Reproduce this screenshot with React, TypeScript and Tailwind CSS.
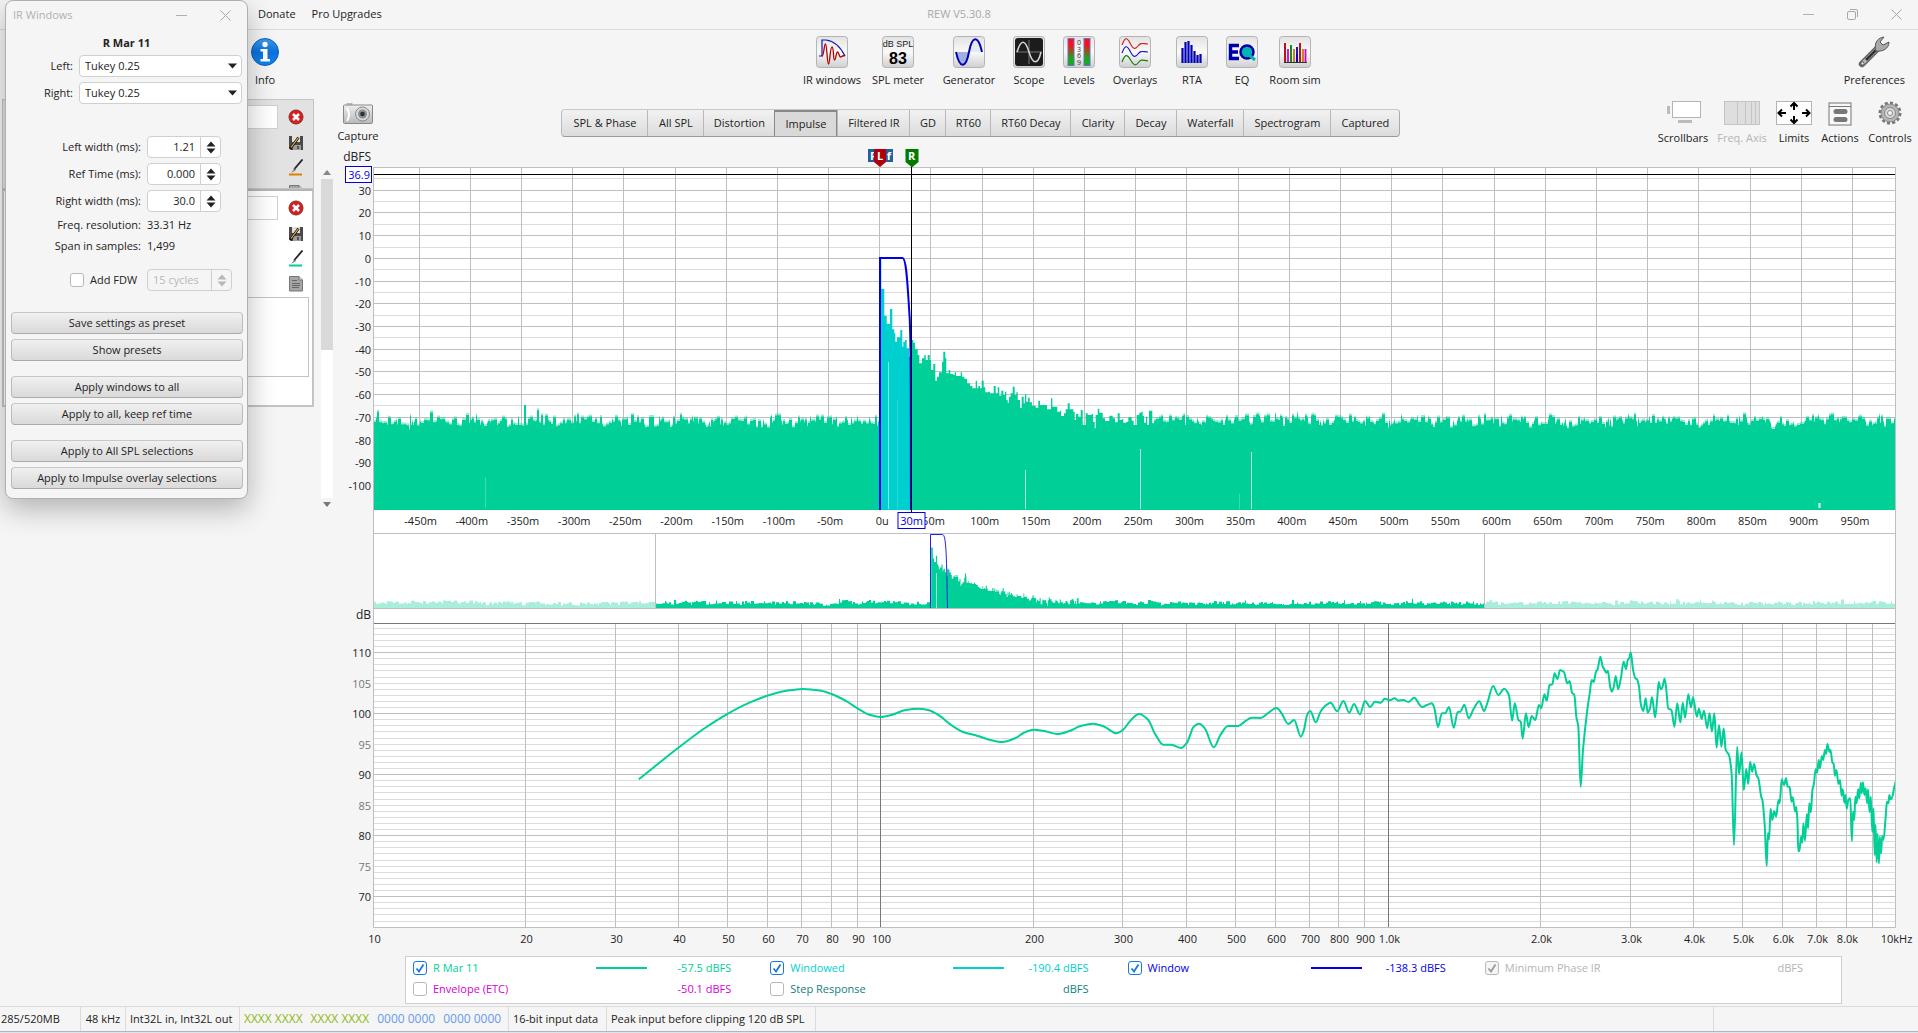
import React from "react";

type Pt = [number, number];

const GREEN = "#00cf97";
const CYAN = "#00cfcf";

/* ---------- data ---------- */

const parse = (s: string): Pt[] => s.trim().split(/\s+/).map((p) => p.split(",").map(Number) as Pt);

const LOW = parse(`42,358 132,262 187,207 243,160 290,128 333,106 370,93 410,87 450,92 474,102 505,122 532,145 560,165 584,171 610,164 640,150 668,146 690,150 712,164 745,198 770,217 800,227 830,240 857,246 885,235 905,218 926,209 950,213 980,222 1005,214 1030,199 1060,191 1085,200 1112,220 1128,208 1143,182 1163,162 1182,178 1200,225 1217,254 1235,254 1257,264 1270,248 1285,200 1297,191 1310,205 1330,262 1345,225 1362,198 1385,198 1400,184 1415,173 1435,174 1450,161 1471,144 1482,160 1497,192 1510,180`).map(([x, y]): Pt => [247 + x / 2.24, 660 + y / 3]);

const HIGH = parse(`2,350 10,330 18,285 26,273 40,307 52,275 62,260 78,248 94,274 110,243 125,278 137,252 152,283 165,243 178,261 190,245 205,248 215,236 228,241 240,235 250,242 262,240 275,246 290,233 302,252 310,261 322,255 335,250 341,265 350,321 360,280 368,280 378,261 390,323 400,276 407,275 417,254 428,295 440,268 455,244 467,273 475,250 490,198 503,225 518,206 530,225 538,302 545,250 554,300 560,305 565,356 573,280 580,321 588,288 597,300 606,255 612,265 620,223 626,242 633,195 640,193 646,160 653,178 660,150 670,157 678,190 684,183 690,218 696,225 701,290 706,320 712,500 718,390 730,260 735,220 740,180 745,186 751,155 755,148 762,110 768,140 773,150 777,158 781,152 787,200 791,215 796,200 801,168 807,208 814,175 821,125 827,147 831,122 836,112 839,97 845,150 851,175 855,178 860,200 865,255 871,273 877,235 882,278 888,265 893,231 901,292 906,240 910,186 915,208 919,203 925,176 929,205 934,265 942,270 950,320 957,250 965,307 971,248 977,293 985,223 992,262 997,232 1007,290 1012,266 1019,297 1025,272 1033,325 1039,280 1045,335 1051,280 1057,383 1063,315 1069,380 1075,325 1080,390 1088,405 1095,460 1101,676 1109,380 1114,463 1120,397 1126,510 1132,447 1137,492 1142,425 1147,455 1152,432 1158,465 1163,475 1170,530 1173,540 1179,615 1184,738 1187,640 1190,658 1194,566 1198,600 1203,573 1208,590 1214,540 1217,550 1222,478 1228,495 1233,475 1237,500 1242,500 1247,545 1250,532 1256,575 1259,560 1262,600 1264,693 1267,693 1271,650 1274,668 1277,610 1281,662 1286,582 1289,625 1292,550 1296,577 1300,510 1304,490 1308,448 1312,458 1316,420 1319,445 1324,408 1327,420 1332,390 1335,402 1338,372 1343,395 1346,390 1351,430 1354,430 1357,467 1361,450 1366,492 1370,480 1374,527 1377,508 1381,548 1384,525 1387,566 1391,540 1396,535 1400,663 1403,575 1406,600 1409,530 1412,550 1416,508 1419,535 1423,488 1425,520 1428,487 1432,525 1435,505 1439,550 1441,508 1445,577 1448,530 1452,635 1455,565 1458,705 1460,615 1463,727 1465,642 1469,730 1471,650 1474,700 1477,648 1480,660 1486,590 1489,545 1493,550 1495,525 1499,538 1504,525 1507,505 1509,495 1513,478`).map(([x, y]): Pt => [927 + x / 2.537, 620 + y / 3]);

const DIRECT = parse(`62,355 64,447 73,527 80,552 90,507 97,568 103,580 106,605 111,592 121,570 127,620 130,605 135,600 140,625 147,650`).map(([x, y]): Pt => [487 + x / 3, 140 + y / 3]);

const DECAY = parse(`153,600 160,608 165,628 173,645 178,670 186,655 193,645 197,660 203,645 209,660 213,690 220,672 226,722 231,710 237,697 246,665 250,635 256,655 259,700 266,690 271,702 280,705 284,697 288,708 302,697 306,710 313,716 321,730 330,738 337,745 347,722 351,745 355,738 360,745 365,722 371,742 376,757 385,755 390,760 401,738 407,760 413,742 418,767 424,752 430,765 435,755 439,780 443,788 447,770 452,760 458,740 464,765 469,757 473,780 480,803 485,770 491,790 495,763 499,785 504,773 509,787 516,797 527,803 535,782 540,795 554,795 561,808 573,775 577,800 589,800 592,815 600,812 603,828 612,820 617,808 623,790 629,808 640,815 644,840 648,822 655,830 662,810 668,855 677,820 683,825 695,822 699,845 704,865 707,825 713,806 718,818 728,835 735,843 748,827 758,835 765,847 773,820 779,840 785,838 790,848 799,845 805,832 815,842 821,855 830,825 838,818 844,815 848,828 852,848 858,830 862,855 867,812 877,850`).map(([x, y]): Pt => [487 + x / 3, 140 + y / 3]);

function noise(from: number, to: number, seed: number, base: number, amp: number): Pt[] {
  let s = seed;
  const rnd = () => {
    s = (s * 1664525 + 1013904223) % 4294967296;
    return s / 4294967296;
  };
  const out: Pt[] = [];
  let drift = 0;
  for (let x = from; x < to; ) {
    drift = drift * 0.7 + (rnd() - 0.5) * amp * 0.5;
    const spike = rnd() > 0.93 ? -amp * (0.3 + rnd() * 0.6) : 0;
    out.push([x, base + drift + (rnd() - 0.5) * amp * 1.1 + spike]);
    x += 1 + Math.floor(rnd() * 3);
  }
  return out;
}

const NOISE_LEFT = noise(0, 507, 7, 422, 8);
const NOISE_RIGHT = noise(781, 1523, 23, 421, 8);

function stepArea(pts: Pt[], end: number, bottom: number): string {
  let d = `M${pts[0][0]} ${bottom}V${pts[0][1].toFixed(1)}`;
  for (let i = 1; i < pts.length; i++) d += `H${pts[i][0].toFixed(1)}V${pts[i][1].toFixed(1)}`;
  return `${d}H${end}V${bottom}Z`;
}

function smooth(pts: Pt[]): string {
  const n = pts.length;
  const sl = (i: number) => (pts[i + 1][1] - pts[i][1]) / (pts[i + 1][0] - pts[i][0]);
  const m = pts.map((_, i) => {
    if (i === 0) return sl(0);
    if (i === n - 1) return sl(n - 2);
    const a = sl(i - 1);
    const b = sl(i);
    return a * b <= 0 ? 0 : (2 * a * b) / (a + b);
  });
  let d = `M${pts[0][0]} ${pts[0][1]}`;
  for (let i = 0; i < n - 1; i++) {
    const [x0, y0] = pts[i];
    const [x1, y1] = pts[i + 1];
    const h = (x1 - x0) / 3;
    d += `C${(x0 + h).toFixed(1)} ${(y0 + m[i] * h).toFixed(1)} ${(x1 - h).toFixed(1)} ${(y1 - m[i + 1] * h).toFixed(1)} ${x1.toFixed(1)} ${y1.toFixed(1)}`;
  }
  return d;
}

const toOverview = (p: Pt[]): Pt[] => p.map(([x, y]) => [557.6 + (x - 507.3) * 0.544, 534.5 + (y - 258.3) * 0.419]);

/* ---------- scales ---------- */

const W = 1523;
const pct = (x: number) => `${((x / W) * 100).toFixed(3)}%`;
const timeX = (ms: number) => Math.round(507.3 + ms * 1.0238) - 0.5;
const dbfsY = (db: number) => Math.round(257.9 - db * 2.27) + 0.5;
const freqX = (f: number) => Math.round(0.5 + 507.5 * (Math.log10(f) - 1)) - 0.5;
const splY = (db: number) => Math.round(714.1 - (db - 100) * 6.1) - 0.5;

const TIMES = Array.from({ length: 29 }, (_, i) => -450 + i * 50);
const FREQS = [20, 30, 40, 50, 60, 70, 80, 90, 100, 200, 300, 400, 500, 600, 700, 800, 900, 1000, 2000, 3000, 4000, 5000, 6000, 7000, 8000, 9000];
const FREQ_LABELS: [number, string][] = [
  [10, "10"], [20, "20"], [30, "30"], [40, "40"], [50, "50"], [60, "60"], [70, "70"], [80, "80"], [90, "90"], [100, "100"],
  [200, "200"], [300, "300"], [400, "400"], [500, "500"], [600, "600"], [700, "700"], [800, "800"], [900, "900"], [1000, "1.0k"],
  [2000, "2.0k"], [3000, "3.0k"], [4000, "4.0k"], [5000, "5.0k"], [6000, "6.0k"], [7000, "7.0k"], [8000, "8.0k"], [10000, "10kHz"],
];

function Charts() {
  const step5 = Array.from({ length: 22 }, (_, i) => 35 - i * 5);
  const spl = Array.from({ length: 49 }, (_, i) => 66 + i);
  return (
    <div className="mr-[22px] flex">
      <svg className="w-[33px] shrink-0 overflow-visible text-[11px]" height="805" fill="#222" textAnchor="end" role="img" aria-label="Level axes">
        <g transform="translate(0,-145)">
          <text x="31" y="161" className="text-xs">dBFS</text>
          {[30, 20, 10, 0, -10, -20, -30, -40, -50, -60, -70, -80, -90, -100].map((v) => (
            <text key={v} x="31" y={dbfsY(v) + 4}>{v}</text>
          ))}
          <rect x="5.5" y="166.500" width="26" height="16" fill="#fff" stroke="#0000e6" />
          <text x="30" y="179" fill="#0000e6">36.9</text>
          <text x="31" y="619" className="text-xs">dB</text>
          {[110, 105, 100, 95, 90, 85, 80, 75, 70].map((v) => (
            <text key={v} x="31" y={splY(v) + 4} fill={v % 10 ? "#777" : "#222"}>{v}</text>
          ))}
        </g>
      </svg>
      <svg className="min-w-0 flex-1 overflow-visible text-[11px]" height="805" fill="#222" textAnchor="middle" role="img" aria-label="Impulse response and frequency response">
        <svg width="100%" height="805" viewBox="0 145 1523 805" preserveAspectRatio="none" fill="none">
          <rect x="0" y="167" width="1523" height="760" fill="#fff" />
          <g shapeRendering="crispEdges">
            {step5.map((v) => (
              <path key={v} d={`M0 ${dbfsY(v)}H1523`} stroke={v % 10 ? "#dcdcdc" : "#bfbfbf"} />
            ))}
            {TIMES.map((t) => (
              <path key={t} d={`M${timeX(t)} 167V510`} stroke="#bfbfbf" />
            ))}
            <path d="M0 167.5H1523M0 533.500H1523M0 608.500H1523" stroke="#bfbfbf" />
            {spl.map((v) => (
              <path key={v} d={`M0 ${splY(v)}H1523`} stroke={v % 10 ? "#dcdcdc" : "#bfbfbf"} />
            ))}
            {FREQS.map((f) => (
              <path key={f} d={`M${freqX(f)} 624V927`} stroke={f === 100 || f === 1000 ? "#777" : "#bfbfbf"} />
            ))}
            <path d="M0 623.500H1523" stroke="#777" />
          </g>
          <g fill={GREEN}>
            <path d={stepArea(NOISE_LEFT.map(([x, y]): Pt => [x, y - 2]), 507, 510)} opacity="0.4" />
            <path d={stepArea(NOISE_LEFT, 507, 510)} />
            <path d={stepArea(DECAY, 781, 510)} />
            <path d={stepArea(NOISE_RIGHT.map(([x, y]): Pt => [x, y - 2]), 1523, 510)} opacity="0.4" />
            <path d={stepArea(NOISE_RIGHT, 1523, 510)} />
            <path d="M151 405H153V425H151Z" />
          </g>
          <path d={stepArea(DIRECT, 538, 510)} fill={CYAN} />
          <path d="M515.500 362V509" stroke="#9feee0" strokeWidth="1" opacity="0.8" />
          <path d="M524.500 400V509" stroke="#4adcd8" strokeWidth="1" opacity="0.6" />
          <path d="M652.500 470V509M767.500 449V509M878.500 452V509" stroke="#b5efdd" />
          <path d="M1446.500 503V508" stroke="#e5fff7" strokeWidth="2" />
          <path d="M112.500 477V508M866.500 494V509" stroke="#3ddbb0" />
          <path d="M507 510V258H529.500C533.500 258 534.500 285 536.500 315S537.500 400 538 510" stroke="#0000f0" strokeWidth="2" />
          <path d="M0 174.500H1523M538.500 166V512" stroke="#000" shapeRendering="crispEdges" />
          <g>
            <path d={stepArea(noise(0, 283, 91, 603, 3), 283, 608)} fill="#a9eedb" />
            <path d={stepArea(noise(1111, 1523, 19, 603, 3), 1523, 608)} fill="#a9eedb" />
            <path d={stepArea(noise(283, 558, 57, 603, 3), 558, 608)} fill={GREEN} />
            <path d={stepArea(toOverview([...DIRECT.slice(1), ...DECAY]), 707, 608)} fill={GREEN} />
            <path d={stepArea(noise(707, 1111, 33, 603, 3), 1111, 608)} fill={GREEN} />
            <path d="M563.500 573V608" stroke="#9eeedb" />
            <path d="M282.500 534V608M1111.500 534V608" stroke="#bfbfbf" />
            <path d="M557.500 608V534.500H569.500C573.500 534.500 573.500 560 574.500 608" stroke="#2222e8" />
          </g>
          <path d={smooth([...LOW, ...HIGH])} stroke={GREEN} strokeWidth="2" strokeLinejoin="round" />
          <path d="M0.500 167V927.500H1522.500V167" stroke="#bfbfbf" />
        </svg>
        <g transform="translate(0,-145)">
          {TIMES.map((t) => (
            <text key={t} x={pct(507.3 + t * 1.0238 + (t < 0 ? 1 : 2))} y="525">{t === 0 ? "0u" : `${t}m`}</text>
          ))}
          {FREQ_LABELS.map(([f, s]) => (
            <text key={f} x={pct(freqX(f) + 1)} y="943">{s}</text>
          ))}
          <svg x={pct(538.5)} y="0" className="overflow-visible">
            <rect x="-13.500" y="512.500" width="27" height="16" fill="#fff" stroke="#0000e6" />
            <text x="0" y="525" fill="#0000e6">30m</text>
            <path d="M-6 149H7V162L1 167H0L-6 162Z" fill="#007a00" />
            <text x="0" y="160" fill="#fff" className="text-[11px] font-bold">R</text>
          </svg>
          <svg x={pct(507)} y="0" className="overflow-visible font-bold" fill="#fff">
            <path d="M-12 149H13V162H-12Z" fill="#25609a" />
            <text x="-7" y="160">F</text>
            <text x="9" y="160">f</text>
            <path d="M-6 149H6V162L0 167L-6 162Z" fill="#ad000c" />
            <text x="0" y="160">L</text>
          </svg>
        </g>
      </svg>
    </div>
  );
}

/* ---------- icons ---------- */

function Tile({ children }: { children?: React.ReactNode }) {
  return (
    <svg width="32" height="32" viewBox="0 0 32 32" fill="none" aria-hidden="true">
      <defs>
        <linearGradient id="tile" x1="0" y1="0" x2="0" y2="1">
          <stop offset="0" stopColor="#e2e2e2" />
          <stop offset="0.5" stopColor="#fafafa" />
          <stop offset="1" stopColor="#cfcfcf" />
        </linearGradient>
      </defs>
      <rect x="0.500" y="0.500" width="31" height="31" rx="3" fill="url(#tile)" stroke="#b4b4b4" />
      {children}
    </svg>
  );
}

const TOOLS: { name: string; cls: string; art: React.ReactNode }[] = [
  {
    name: "IR windows", cls: "w-[66px]",
    art: (<><path d="M3 20H6V4H10C19 5 25 12 29 20" stroke="#1111c0" strokeWidth="1.2" /><path d="M6 20C8 20 8 8 9.500 8S11 28 12.500 28S14 11 16 11S17 24 18.500 24S20 16 21.500 16S23 21 24.500 21S26 19 29 20" stroke="#b00000" strokeWidth="1.3" /></>),
  },
  {
    name: "SPL meter", cls: "w-[66px]",
    art: (<><text x="16" y="11" textAnchor="middle" fontSize="9" fill="#222" fontFamily="Liberation Sans">dB SPL</text><text x="16" y="28" textAnchor="middle" fontSize="16" fontWeight="bold" fill="#000" fontFamily="Liberation Sans">83</text></>),
  },
  {
    name: "Generator", cls: "w-[76px]",
    art: (<><path d="M4 16C7 32 13 32 16 16Z" fill="#9fb0e0" /><path d="M16 16C19 -1 25 -1 28 16Z" fill="#e4e8f4" /><path d="M3 16C7 34 13 32 16 16S25 -2 29 16" stroke="#0000b4" strokeWidth="2" /></>),
  },
  {
    name: "Scope", cls: "w-[44px]",
    art: (<><rect x="2" y="2" width="28" height="28" rx="3" fill="#1c1c1c" /><path d="M3 16H29M16 4V28" stroke="#777" /><path d="M4 16C8 3 12 3 16 16S25 29 28 16" stroke="#d8d8d8" strokeWidth="1.5" /></>),
  },
  {
    name: "Levels", cls: "w-[56px]",
    art: (
      <>
        <defs><linearGradient id="level" x1="0" y1="0" x2="0" y2="1"><stop offset="0.25" stopColor="#ff1010" /><stop offset="0.75" stopColor="#10b010" /></linearGradient></defs>
        <rect x="5" y="2.500" width="6" height="27" fill="url(#level)" stroke="#6a6ad8" /><rect x="21" y="2.500" width="6" height="27" fill="url(#level)" stroke="#6a6ad8" />
        {["0", "3", "6", "9"].map((n, i) => (<text key={n} x="16" y={9 + i * 6.5} textAnchor="middle" fontSize="7" fill="#333">{n}</text>))}
      </>
    ),
  },
  {
    name: "Overlays", cls: "w-[56px]",
    art: (<><path d="M3 9C6 1 8 1 11 7S16 14 19 10S24 8 29 8" stroke="#d02020" strokeWidth="1.200" /><path d="M3 17C6 9 8 9 11 15S16 22 19 18S24 16 29 16" stroke="#1818d0" strokeWidth="1.200" /><path d="M3 26C6 18 8 18 11 23S16 31 19 27S24 24 29 25" stroke="#108010" strokeWidth="1.200" /></>),
  },
  {
    name: "RTA", cls: "w-[58px]",
    art: <path d="M6.500 27V12M9.500 27V6M12.500 27V5M15.500 27V9M18.500 27V15M21.500 27V19M24.500 27V18" stroke="#0000b8" strokeWidth="2.2" />,
  },
  {
    name: "EQ", cls: "w-[42px]",
    art: (<><path d="M13 9.500H4.500V22.500H13M4.500 16H12" stroke="#0000a8" strokeWidth="3.5" /><circle cx="21" cy="16" r="6.500" fill="#00b4b4" stroke="#0000a8" strokeWidth="2.5" /><path d="M23 19L29 24" stroke="#00b4b4" strokeWidth="3" /></>),
  },
  {
    name: "Room sim", cls: "w-[64px]",
    art: (<><path d="M6 7V26M21 7V26" stroke="#b00000" strokeWidth="1.800" /><path d="M9 13V26M18 18V26M26.500 13V26" stroke="#d000d0" strokeWidth="1.800" /><path d="M12 9V26" stroke="#008000" strokeWidth="1.800" /><path d="M15 13V26M24 13V26" stroke="#c07818" strokeWidth="1.800" /><path d="M18 11V26" stroke="#0000b8" strokeWidth="1.800" /><path d="M5 26.500H28" stroke="#333" /></>),
  },
];

const VIEW_TOOLS: { name: string; cls: string; art: React.ReactNode }[] = [
  { name: "Scrollbars", cls: "w-[58px]", art: (<><rect x="7.500" y="0.500" width="28" height="16" fill="#fff" stroke="#b4b4b4" /><path d="M3.500 5V13M13 20.500H27" stroke="#bbb" strokeWidth="3" /></>) },
  { name: "Freq. Axis", cls: "w-[60px] text-[#b4b4b4]", art: (<><rect x="0.500" y="0.500" width="35" height="23" fill="#dedede" stroke="#c4c4c4" /><path d="M13.500 0V24M21.500 0V24M27.500 0V24M31.500 0V24" stroke="#c4c4c4" /></>) },
  { name: "Limits", cls: "w-[44px]", art: (<><rect x="0.500" y="0.500" width="35" height="23" fill="#fff" stroke="#b4b4b4" /><path d="M18 9V2.500M14.500 5.500L18 2L21.500 5.500M18 15V21.500M14.500 18.500L18 22L21.500 18.500M10 12H3M6 8.500L2.500 12L6 15.500M26 12H33M30 8.500L33.500 12L30 15.500" stroke="#000" strokeWidth="2" /></>) },
  { name: "Actions", cls: "w-[48px]", art: (<><rect x="7" y="2" width="22" height="22" fill="#f8f8f8" stroke="#777" /><path d="M7 5.500H29" stroke="#777" /><path d="M14 10.500H23M14 18.500H23" stroke="#777" strokeWidth="5" strokeLinecap="round" /></>) },
  {
    name: "Controls", cls: "w-[52px]",
    art: (<><circle cx="18" cy="12" r="10" stroke="#777" strokeWidth="3" strokeDasharray="3 2.200" /><circle cx="18" cy="12" r="9" fill="#b4b4b4" stroke="#888" /><circle cx="18" cy="12" r="5.500" fill="#d8d8d8" stroke="#888" /><circle cx="18" cy="12" r="2.500" fill="#f5f5f5" stroke="#888" /></>),
  },
];

const DeleteIcon = () => (
  <svg width="16" height="16" viewBox="0 0 16 16" aria-hidden="true"><circle cx="8" cy="8" r="7" fill="#d42020" stroke="#8c2a22" /><path d="M5 5L11 11M11 5L5 11" stroke="#fff" strokeWidth="2.500" /></svg>
);
const SaveIcon = () => (
  <svg width="16" height="16" viewBox="0 0 16 16" aria-hidden="true"><path d="M1 1H15V15H3L1 13Z" fill="#4a4a4a" /><path d="M4 1H12V7H4Z" fill="#e0e0e0" /><path d="M5 10H13V15H5Z" fill="#9c9c9c" /><path d="M9 11H11V14H9Z" fill="#555" /><path d="M2 14L10.500 2.500" stroke="#111" strokeWidth="2.600" /><path d="M3 12.500L10.500 2.500" stroke="#e8b23c" strokeWidth="1.200" /></svg>
);
const BrushIcon = ({ color }: { color: string }) => (
  <svg width="16" height="17" viewBox="0 0 16 17" aria-hidden="true"><path d="M14.500 0.500L6 10.500" stroke="#222" strokeWidth="1.800" /><path d="M7 9L3 14L8 11Z" fill="#777" /><path d="M1 15.500H14" stroke={color} strokeWidth="2" /></svg>
);
const NoteIcon = () => (
  <svg width="16" height="17" viewBox="0 0 16 17" aria-hidden="true"><path d="M1.500 1.500H11L14.500 5V16H1.500Z" fill="#a6a6a6" stroke="#777" /><path d="M11 1.500V5H14.500" fill="#ddd" stroke="#777" /><path d="M4 5.500H9M4 8.500H12M4 10.500H12M4 12.500H11" stroke="#666" /></svg>
);

const Minimise = () => (<svg width="11" height="11" viewBox="0 0 11 11" aria-hidden="true"><path d="M0 5.500H11" stroke="#b0b0b0" /></svg>);
const Close = () => (<svg width="11" height="11" viewBox="0 0 11 11" aria-hidden="true"><path d="M0.500 0.500L10.500 10.500M10.500 0.500L0.500 10.500" stroke="#a8a8a8" /></svg>);

/* ---------- window chrome ---------- */

function TitleBar() {
  return (
    <header className="grid h-[30px] grid-cols-[1fr_auto_1fr] items-center border-b border-[#dcdcdc]">
      <nav className="flex gap-4 pl-[258px]">
        <button>Donate</button>
        <button>Pro Upgrades</button>
      </nav>
      <h1 className="text-[11px] text-[#a8a8a8]">REW V5.30.8</h1>
      <div className="flex justify-end gap-[33px] pr-4">
        <button aria-label="Minimise"><Minimise /></button>
        <button aria-label="Restore"><svg width="11" height="11" viewBox="0 0 11 11" fill="none" aria-hidden="true"><rect x="0.500" y="2.500" width="8" height="8" rx="1.500" stroke="#a8a8a8" /><path d="M3 0.500H9Q10.500 0.500 10.500 2V8" stroke="#a8a8a8" /></svg></button>
        <button aria-label="Close"><Close /></button>
      </div>
    </header>
  );
}

function Toolbar() {
  return (
    <div className="ml-52 grid h-[69px] grid-cols-[1fr_auto_1fr] items-start pt-1.5">
      <button className="ml-[42px] flex w-[30px] flex-col items-center gap-1 justify-self-start">
        <svg width="30" height="32" viewBox="0 0 30 32" aria-hidden="true">
          <defs><linearGradient id="info" x1="0" y1="0" x2="0" y2="1"><stop offset="0" stopColor="#3f9bea" /><stop offset="0.5" stopColor="#0a70dc" /><stop offset="1" stopColor="#1186ee" /></linearGradient></defs>
          <circle cx="15" cy="16" r="13.500" fill="url(#info)" stroke="#0a62bd" /><circle cx="15" cy="8.500" r="2.700" fill="#fff" /><path d="M10.500 13H17.500V23H20V25.500H10.500V23H13V15.500H10.500Z" fill="#fff" />
        </svg>
        <span className="leading-4">Info</span>
      </button>
      <div className="flex">
        {TOOLS.map((t) => (
          <button key={t.name} className={`flex flex-col items-center gap-1 whitespace-nowrap ${t.cls}`}>
            <Tile>{t.art}</Tile>
            <span className="leading-4">{t.name}</span>
          </button>
        ))}
      </div>
      <button className="mr-[13px] flex flex-col items-center gap-1 justify-self-end">
        <svg width="32" height="32" viewBox="0 0 32 32" fill="none" aria-hidden="true">
          <path d="M4 28L19 13" stroke="#666" strokeWidth="6.500" strokeLinecap="round" /><path d="M5 27L19 13" stroke="#b8b8b8" strokeWidth="3.500" strokeLinecap="round" /><path d="M8 24L18 14" stroke="#333" strokeWidth="2.500" />
          <path d="M18 15C16 9 18 2 26 1L22 6L25 9L31 6C31 13 24 16 18 15Z" fill="#aaa" stroke="#555" /><circle cx="4.500" cy="27.500" r="1.500" fill="#f5f5f5" stroke="#555" />
        </svg>
        <span className="leading-4">Preferences</span>
      </button>
    </div>
  );
}

function MeasurementTools({ color, note }: { color: string; note?: boolean }) {
  return (
    <div className="flex flex-col gap-2">
      <button aria-label="Delete measurement"><DeleteIcon /></button>
      <button className="mt-0.5" aria-label="Save measurement"><SaveIcon /></button>
      <button aria-label="Trace colour"><BrushIcon color={color} /></button>
      <button aria-label="Notes" className={note ? "" : "h-1 overflow-hidden"}><NoteIcon /></button>
    </div>
  );
}

function MeasurementList() {
  return (
    <aside className="flex w-[340px] shrink-0">
      <div className="ml-0.5 w-[312px]">
        <div className="flex h-[90px] items-start gap-2.5 border border-[#c4c4c4] bg-[#e2e2e2] pt-[5px] pl-2">
          <input aria-label="First measurement name" className="h-6 w-[267px] border border-[#cfcfcf] bg-white" />
          <div className="-mr-1 pt-1"><MeasurementTools color="#e08000" /></div>
        </div>
        <div className="h-[218px] border-2 border-t-[#b4b4b4] border-r-[#c4c4c4] border-b-[#c4c4c4] border-l-[#c4c4c4] bg-white">
          <div className="flex h-[106px] items-start gap-2.5 pt-[5px] pl-[7px]">
            <input aria-label="Second measurement name" className="h-6 w-[267px] border border-[#cfcfcf] bg-white" />
            <div className="pt-1"><MeasurementTools color={GREEN} note /></div>
          </div>
          <textarea aria-label="Measurement notes" className="ml-[7px] block h-20 w-[298px] resize-none border border-[#c4c4c4] bg-white" />
        </div>
      </div>
      <div className="ml-[7px] flex h-[408px] w-3 flex-col items-center">
        <svg className="mt-[71px] mb-1 shrink-0" width="8" height="5" aria-hidden="true"><path d="M4 0L8 5H0Z" fill="#888" /></svg>
        <div className="w-3 flex-1 bg-white"><div className="h-[171px] bg-[#d9d9d9]" /></div>
        <svg className="mt-1 shrink-0" width="8" height="5" aria-hidden="true"><path d="M0 0H8L4 5Z" fill="#777" /></svg>
      </div>
    </aside>
  );
}

const TABS: [string, string][] = [
  ["SPL & Phase", "w-[85px]"], ["All SPL", "w-[56px]"], ["Distortion", "w-[71px]"], ["Impulse", "w-[63px]"], ["Filtered IR", "w-[72px]"], ["GD", "w-[36px]"], ["RT60", "w-[45px]"],
  ["RT60 Decay", "w-[80px]"], ["Clarity", "w-[54px]"], ["Decay", "w-[52px]"], ["Waterfall", "w-[67px]"], ["Spectrogram", "w-[87px]"], ["Captured", "w-[69px]"],
];

function ViewBar() {
  return (
    <div className="flex h-[46px] items-start">
      <button className="mt-1 flex w-[36px] flex-col items-center gap-1">
        <svg width="30" height="21" viewBox="0 0 30 21" aria-hidden="true">
          <defs><linearGradient id="cam" x1="0" y1="0" x2="0" y2="1"><stop offset="0" stopColor="#eee" /><stop offset="1" stopColor="#b8b8b8" /></linearGradient></defs>
          <path d="M4 0H9V3H4Z" fill="#ccc" stroke="#888" strokeWidth="0.500" /><rect x="0.500" y="2" width="29" height="18.500" rx="1" fill="url(#cam)" stroke="#888" /><path d="M4 5Q8 12 4 18" stroke="#fff" strokeWidth="2" fill="none" />
          <circle cx="19.500" cy="11" r="7" fill="#d8d8d8" stroke="#888" /><circle cx="19.500" cy="11" r="4.500" fill="#8a8f92" /><circle cx="19.500" cy="11" r="2.300" fill="#26323c" />
        </svg>
        <span className="leading-4">Capture</span>
      </button>
      <div className="shrink basis-0 grow-[185]" />
      <div role="tablist" className="mt-2.5 flex h-7 overflow-hidden rounded border border-t-[#c8c8c8] border-r-[#aaa] border-b-[#999] border-l-[#bbb] bg-gradient-to-b from-[#f2f2f2] to-[#dcdcdc]">
        {TABS.map(([name, w], i) => (
          <button
            key={name}
            role="tab"
            aria-selected={name === "Impulse"}
            className={`whitespace-nowrap ${w} ${i ? "border-l border-[#b8b8b8]" : ""} ${name === "Impulse" ? "border-t-2 border-r border-t-[#888] border-r-[#888] border-l-[#888] bg-[#d9d9d9]" : ""}`}
          >
            {name}
          </button>
        ))}
      </div>
      <div className="shrink basis-0 grow-[253]" />
      <div className="mr-0.5 flex pt-0.5">
        {VIEW_TOOLS.map((t) => (
          <button key={t.name} className={`flex flex-col items-center gap-1 whitespace-nowrap ${t.cls}`}>
            <svg width="36" height="25" viewBox="0 0 36 25" fill="none" aria-hidden="true">{t.art}</svg>
            <span className="leading-4">{t.name}</span>
          </button>
        ))}
      </div>
    </div>
  );
}

/* ---------- shared controls ---------- */

function Check({ id, on, disabled }: { id: string; on?: boolean; disabled?: boolean }) {
  return (
    <span className="relative inline-flex h-3.5 w-3.5 shrink-0">
      <input
        id={id}
        type="checkbox"
        defaultChecked={on}
        disabled={disabled}
        className="peer h-3.5 w-3.5 appearance-none rounded-[3px] border border-[#b8b8b8] bg-white checked:border-[#1878e0] disabled:border-[#b8b8b8] disabled:bg-[#f5f5f5]"
      />
      <svg className={`pointer-events-none absolute inset-0 hidden peer-checked:block ${disabled ? "text-[#999]" : "text-[#1878e0]"}`} viewBox="0 0 14 14" fill="none" aria-hidden="true">
        <path d="M3.500 7.500L6 10.500L10.500 3.500" stroke="currentColor" strokeWidth="1.800" />
      </svg>
    </span>
  );
}

const LEGEND: { name: string; color: string; value: string; on?: boolean; line?: boolean; disabled?: boolean }[] = [
  { name: "R Mar 11", color: "text-[#00cf97]", value: "-57.5 dBFS", on: true, line: true },
  { name: "Windowed", color: "text-[#00cfcf]", value: "-190.4 dBFS", on: true, line: true },
  { name: "Window", color: "text-[#0000f0]", value: "-138.3 dBFS", on: true, line: true },
  { name: "Minimum Phase IR", color: "text-[#b4b4b4]", value: "dBFS", on: true, disabled: true },
  { name: "Envelope (ETC)", color: "text-[#d800d8]", value: "-50.1 dBFS" },
  { name: "Step Response", color: "text-[#128080]", value: "dBFS" },
];

function Legend() {
  return (
    <div className="mt-1.5 mr-[76px] ml-[65px] grid h-12 grid-cols-4 content-start gap-y-[3px] border border-[#cfcfcf] bg-white px-[3px] pt-0.5">
      {LEGEND.map((l) => (
        <div key={l.name} className={`flex h-[18px] items-center pr-[35px] pl-1 ${l.color}`}>
          <Check id={l.name} on={l.on} disabled={l.disabled} />
          <label htmlFor={l.name} className="ml-1.5 w-[163px] whitespace-nowrap">{l.name}</label>
          {l.line && <span className="h-0.5 w-[51px] bg-current" />}
          <span className="ml-auto">{l.value}</span>
        </div>
      ))}
    </div>
  );
}

function StatusBar() {
  const cell = "flex items-center border-r border-[#dcdcdc] whitespace-nowrap";
  return (
    <footer className="mt-auto border-b border-[#dde4ee]">
      <div className="flex h-[26px] border-t border-b border-t-[#dcdcdc] border-b-[#b0b6bc]">
        <span className={`${cell} w-[81px] pl-px`}>285/520MB</span>
        <span className={`${cell} w-[45px] justify-center`}>48 kHz</span>
        <span className={`${cell} w-[114px] pl-1`}>Int32L in, Int32L out</span>
        <span className={`${cell} w-[269px] gap-2 pl-1 text-xs`}>
          <span className="text-[#8fb820]">XXXX XXXX</span>
          <span className="text-[#8fb820]">XXXX XXXX</span>
          <span className="text-[#6699ee]">0000 0000</span>
          <span className="text-[#6699ee]">0000 0000</span>
        </span>
        <span className={`${cell} w-[98px] pl-1`}>16-bit input data</span>
        <span className={`${cell} w-[209px] pl-1`}>Peak input before clipping 120 dB SPL</span>
        <span className={`${cell} flex-1`} />
        <span className="w-[204px]" />
      </div>
    </footer>
  );
}

/* ---------- dialog ---------- */

function Combo({ label }: { label: string }) {
  return (
    <div className="flex items-center">
      <label htmlFor={`combo-${label}`} className="w-[67px] text-right">{label}:</label>
      <div className="relative ml-1.5">
        <select id={`combo-${label}`} className="block h-[22px] w-[163px] appearance-none rounded border border-[#d0d0d0] bg-white pl-[5px]">
          <option>Tukey 0.25</option>
        </select>
        <svg className="pointer-events-none absolute top-2 right-[5px]" width="9" height="6" aria-hidden="true"><path d="M0 0.500H9L4.500 5.500Z" fill="#222" /></svg>
      </div>
    </div>
  );
}

function Spin({ id, value, cls, disabled }: { id: string; value: string; cls: string; disabled?: boolean }) {
  return (
    <div className={`flex h-[22px] overflow-hidden rounded border border-[#d0d0d0] ${disabled ? "text-[#b8b8b8]" : "bg-white"} ${cls}`}>
      <input id={id} aria-label={id} defaultValue={value} disabled={disabled} className={`min-w-0 flex-1 bg-transparent px-[5px] ${disabled ? "" : "text-right"}`} />
      <button aria-label={`${id} step`} className="flex w-5 items-center justify-center border-l border-[#d0d0d0]">
        <svg width="10" height="13" viewBox="0 0 10 13" fill="currentColor" aria-hidden="true"><path d="M5 0.500L9.500 5.500H0.500ZM5 12.500L9.500 7.500H0.500Z" /></svg>
      </button>
    </div>
  );
}

function PushButtons({ names }: { names: string[] }) {
  return (
    <div className="flex flex-col gap-[5px]">
      {names.map((n) => (
        <button key={n} className="h-[22px] rounded border border-t-[#c8c8c8] border-r-[#bbb] border-b-[#aaa] border-l-[#bbb] bg-gradient-to-b from-[#f0f0f0] to-[#dadada]">{n}</button>
      ))}
    </div>
  );
}

function IrWindows() {
  return (
    <section role="dialog" aria-label="IR Windows" className="absolute top-0 left-[5px] h-[499px] w-[243px] rounded-lg border border-[#b0b0b0] bg-[#f5f5f5] shadow-[0_10px_28px_rgba(0,0,0,0.28)]">
      <div className="flex h-7 items-center pr-4 pl-[7px] text-[#b0b0b0]">
        <h2 className="flex-1">IR Windows</h2>
        <button aria-label="Minimise dialog" className="mr-[33px]"><Minimise /></button>
        <button aria-label="Close dialog"><Close /></button>
      </div>
      <h3 className="mt-1.5 mb-1 text-center leading-4 font-bold">R Mar 11</h3>
      <div className="flex flex-col gap-[5px]"><Combo label="Left" /><Combo label="Right" /></div>
      <div className="mt-8 flex flex-col gap-[5px]">
        {[["Left width (ms)", "1.21"], ["Ref Time (ms)", "0.000"], ["Right width (ms)", "30.0"]].map(([l, v]) => (
          <div key={l} className="flex items-center">
            <label htmlFor={l} className="w-[135px] text-right">{l}:</label>
            <Spin id={l} value={v} cls="ml-1.5 w-[74px]" />
          </div>
        ))}
      </div>
      <dl className="mt-0.5 grid grid-cols-[135px_auto] gap-x-1.5 leading-[21px]">
        <dt className="text-right">Freq. resolution:</dt><dd>33.31 Hz</dd>
        <dt className="text-right">Span in samples:</dt><dd>1,499</dd>
      </dl>
      <div className="mt-[13px] flex items-center pl-16">
        <Check id="fdw" />
        <label htmlFor="fdw" className="ml-1.5 w-[57px] whitespace-nowrap">Add FDW</label>
        <Spin id="FDW cycles" value="15 cycles" cls="w-[85px]" disabled />
      </div>
      <div className="mt-[21px] mr-1 ml-[5px] flex flex-col gap-[15px]">
        <PushButtons names={["Save settings as preset", "Show presets"]} />
        <PushButtons names={["Apply windows to all", "Apply to all, keep ref time"]} />
        <PushButtons names={["Apply to All SPL selections", "Apply to Impulse overlay selections"]} />
      </div>
    </section>
  );
}

export default function App() {
  return (
    <div className="relative flex min-h-screen flex-col overflow-hidden bg-[#f5f5f5] font-['Open_Sans','Noto_Sans',sans-serif] text-[11px] text-[#222]">
      <TitleBar />
      <Toolbar />
      <main className="flex">
        <MeasurementList />
        <div className="min-w-0 flex-1">
          <ViewBar />
          <Charts />
          <Legend />
        </div>
      </main>
      <StatusBar />
      <IrWindows />
    </div>
  );
}
